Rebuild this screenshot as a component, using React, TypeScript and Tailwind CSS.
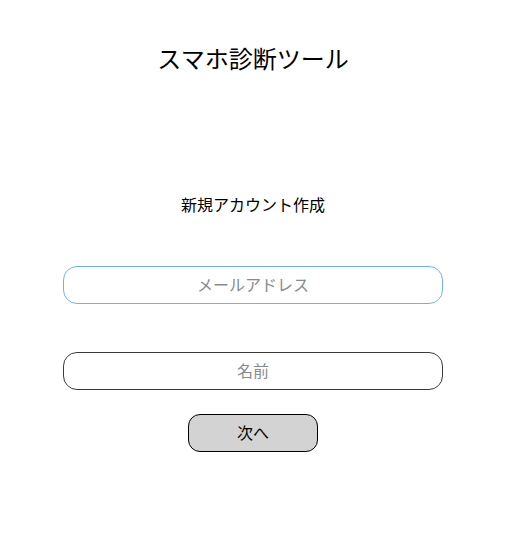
import React from "react";

const App: React.FC = () => {
  return (
    <div
      className="min-h-[555px] w-[506px] bg-white flex flex-col items-center text-black"
      style={{ fontFamily: '"Noto Sans CJK JP", "Noto Sans", sans-serif' }}
    >
      <h1 className="mt-[40px] text-[24px] leading-[36px] font-normal">スマホ診断ツール</h1>
      <p className="mt-[116px] text-[16px] leading-[24px]">新規アカウント作成</p>
      <input
        type="text"
        placeholder="メールアドレス"
        className="mt-[50px] w-[380px] h-[38px] pb-[3px] rounded-[14px] border border-[#6fb2f2] text-center text-[16px] placeholder:text-[#858b93] outline-none"
      />
      <input
        type="text"
        placeholder="名前"
        className="mt-[48px] w-[380px] h-[38px] pb-[3px] rounded-[14px] border border-[#3a3a3a] text-center text-[16px] placeholder:text-[#858b93] outline-none"
      />
      <button className="mt-[24px] w-[130px] h-[38px] pb-[2px] rounded-[12px] border border-black bg-[#d3d3d3] text-[16px]">
        次へ
      </button>
    </div>
  );
};

export default App;
